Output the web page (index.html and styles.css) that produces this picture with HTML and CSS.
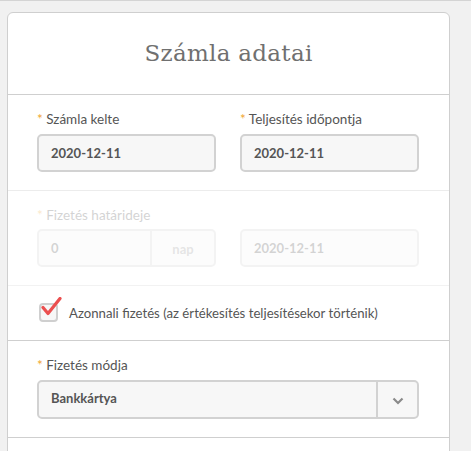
FILE: index.html
```html
<!DOCTYPE html>
<html lang="hu">
<head>
<meta charset="UTF-8">
<meta name="viewport" content="width=device-width, initial-scale=1.0">
<title>Számla adatai</title>
<link rel="stylesheet" href="styles.css">
</head>
<body>
  <div class="card">
    <div class="card-header">
      <h2>Számla adatai</h2>
    </div>

    <!-- Dates -->
    <div class="section section-light">
      <div class="row">
        <div class="field">
          <label><span class="req">*</span> Számla kelte</label>
          <div class="input">2020-12-11</div>
        </div>
        <div class="field">
          <label><span class="req">*</span> Teljesítés időpontja</label>
          <div class="input">2020-12-11</div>
        </div>
      </div>
    </div>

    <!-- Due date (disabled) -->
    <div class="section disabled">
      <label class="label-tight"><span class="req">*</span> Fizetés határideje</label>
      <div class="row">
        <div class="input-group">
          <div class="input">0</div>
          <div class="addon">nap</div>
        </div>
        <div class="input">2020-12-11</div>
      </div>
    </div>

    <!-- Immediate payment -->
    <div class="section check-row">
      <span class="checkbox">
        <svg width="26" height="24" viewBox="0 0 26 24"><path d="M5 10.5 L10 16.5 L22 1.5" fill="none" stroke="#eb4f4f" stroke-width="3.2" stroke-linecap="round" stroke-linejoin="round"/></svg>
      </span>
      <span class="check-label">Azonnali fizetés (az értékesítés teljesítésekor történik)</span>
    </div>

    <!-- Payment method -->
    <div class="section">
      <label><span class="req">*</span> Fizetés módja</label>
      <div class="select">
        <span class="select-value">Bankkártya</span>
        <span class="select-arrow">
          <svg width="12" height="8" viewBox="0 0 12 8"><path d="M1.5 1.5 L6 6 L10.5 1.5" fill="none" stroke="#8a8a8a" stroke-width="2.2"/></svg>
        </span>
      </div>
    </div>

    <div class="section empty"></div>
  </div>
</body>
</html>
```

FILE: styles.css
```css
body { margin: 0; padding: 0; background: #f1f1f1; border-top: 1px solid #d4d4d4; font-family: Lato, "Open Sans", sans-serif; color: #555; }
.card { width: 441px; margin: 11px 0 0 7px; background: #fff; border: 1px solid #cfcfcf; border-radius: 6px 6px 0 0; }
.card-header { height: 81px; border-bottom: 1px solid #cfcfcf; display: flex; align-items: center; justify-content: center; }
.card-header h2 { margin: 0 0 2px 0; font-family: "DejaVu Serif", serif; font-weight: 300; font-size: 23px; color: #707070; letter-spacing: 0.3px; }
.section { padding: 16px 30px 18px 29px; border-bottom: 1px solid #cfcfcf; }
.section-light { border-bottom-color: #ececec; }
.row { display: grid; grid-template-columns: 179px 179px; column-gap: 24px; }
label { display: block; font-size: 13.5px; line-height: 16px; margin-bottom: 7px; color: #555; }
.label-tight { margin-bottom: 6px; }
.req { color: #f0a431; }
.input { box-sizing: border-box; height: 38px; border: 2px solid #d2d2d2; border-radius: 5px; background: #f7f7f7; padding: 0 12px; font-size: 13px; font-weight: bold; line-height: 34px; color: #555; }
.input-group { display: flex; box-sizing: border-box; height: 38px; border: 2px solid #d2d2d2; border-radius: 5px; background: #f7f7f7; }
.input-group .input { border: none; background: none; flex: 1; height: 34px; }
.addon { width: 62px; border-left: 2px solid #d2d2d2; text-align: center; font-size: 13px; font-weight: bold; line-height: 36px; color: #999; }
.disabled { opacity: 0.25; padding-top: 16px; padding-bottom: 18px; }
.check-row { display: flex; align-items: center; padding: 17px 30px 18px 31px; }
.checkbox { position: relative; box-sizing: border-box; width: 19px; height: 19px; border: 2px solid #cfcfcf; border-radius: 4px; background: #f7f7f7; }
.checkbox svg { position: absolute; left: -3px; top: -8px; }
.check-label { margin-left: 11px; font-size: 13.2px; color: #555; }
.select { display: flex; box-sizing: border-box; height: 39px; border: 2px solid #d2d2d2; border-radius: 5px; background: #f7f7f7; }
.select-value { flex: 1; padding: 0 12px; font-size: 13px; font-weight: bold; line-height: 33px; color: #555; }
.select-arrow { width: 39px; border-left: 2px solid #d2d2d2; display: flex; align-items: center; justify-content: center; padding-top: 3px; }
.empty { height: 40px; padding: 0; border-bottom: none; }
```
